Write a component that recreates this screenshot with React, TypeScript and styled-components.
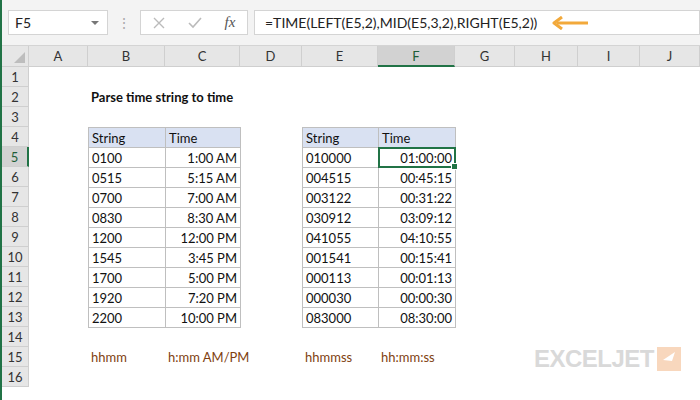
import React from 'react';
import styled, { createGlobalStyle } from 'styled-components';

const Global = createGlobalStyle`
  html, body { margin: 0; padding: 0; background: #fff; }
  body { width: 700px; height: 400px; overflow: hidden; font-family: Lato, "Liberation Sans", sans-serif; }
`;

const COLS = [27, 59, 77, 75, 62, 76, 77, 60, 63, 62, 60];
const LETTERS = ['A', 'B', 'C', 'D', 'E', 'F', 'G', 'H', 'I', 'J'];

const Page = styled.div`
  position: relative;
  width: 700px;
  height: 400px;
  overflow: hidden;
  border-left: 2px solid #217346;
  box-sizing: border-box;
`;

const FormulaBar = styled.div`
  height: 46px;
  background: #f3f3f3;
  display: flex;
  align-items: center;
  padding: 0 0 0 6px;
  gap: 6px;
  border-bottom: 1px solid #d4d4d4;
  box-sizing: border-box;
`;

const Box = styled.div<{ $w?: number }>`
  height: 25px;
  ${p => (p.$w ? `width: ${p.$w}px;` : 'flex: 1;')}
  background: #fff;
  border: 1px solid #d4d4d4;
  display: flex;
  align-items: center;
  box-sizing: border-box;
  font-size: 14px;
  color: #222;
`;

const NameText = styled.span`
  flex: 1;
  padding-left: 6px;
`;

const Caret = styled.span`
  width: 0; height: 0;
  border-left: 4px solid transparent;
  border-right: 4px solid transparent;
  border-top: 4px solid #777;
  margin-right: 8px;
`;

const Dots = styled.div`
  width: 20px;
  text-align: center;
  color: #aaa;
  font-size: 14px;
`;

const FxIcons = styled.div`
  display: flex;
  justify-content: space-around;
  align-items: center;
  width: 100%;
`;

const Fx = styled.span`
  font-family: "Liberation Serif", serif;
  font-style: italic;
  color: #555;
  font-size: 15px;
`;

const FormulaText = styled.span`
  padding-left: 10px;
  font-size: 14px;
  display: flex;
  align-items: center;
  gap: 14px;
`;

const Grid = styled.div`
  display: grid;
  grid-template-columns: ${COLS.map(c => c + 'px').join(' ')};
  grid-auto-rows: 20px;
  grid-template-rows: 21px;
`;

const ColHead = styled.div<{ $sel?: boolean }>`
  background: ${p => (p.$sel ? '#d2d2d2' : '#e6e6e6')};
  border-right: 1px solid #cfcfcf;
  border-bottom: ${p => (p.$sel ? '2px solid #217346' : '1px solid #cfcfcf')};
  box-sizing: border-box;
  display: flex;
  align-items: center;
  justify-content: center;
  font-size: 13px;
  color: ${p => (p.$sel ? '#1e5e38' : '#333')};
`;

const Corner = styled(ColHead)`
  position: relative;
  &::after {
    content: '';
    position: absolute;
    right: 3px; bottom: 3px;
    border-left: 11px solid transparent;
    border-bottom: 11px solid #bdbdbd;
  }
`;

const RowHead = styled.div<{ $sel?: boolean }>`
  background: ${p => (p.$sel ? '#d2d2d2' : '#e6e6e6')};
  border-bottom: 1px solid #cfcfcf;
  border-right: ${p => (p.$sel ? '2px solid #217346' : '1px solid #cfcfcf')};
  box-sizing: border-box;
  display: flex;
  align-items: center;
  justify-content: center;
  font-size: 13px;
  color: ${p => (p.$sel ? '#1e5e38' : '#333')};
`;

type Kind = 'none' | 'head' | 'cell';

const Cell = styled.div<{ $kind: Kind; $right?: boolean; $bold?: boolean; $color?: string; $active?: boolean }>`
  position: relative;
  box-sizing: border-box;
  font-size: 13px;
  display: flex;
  align-items: center;
  padding: 0 3px;
  white-space: nowrap;
  overflow: visible;
  justify-content: ${p => (p.$right ? 'flex-end' : 'flex-start')};
  font-weight: ${p => (p.$bold ? 700 : 400)};
  color: ${p => p.$color || '#111'};
  background: ${p => (p.$kind === 'head' ? '#d9e1f2' : p.$kind === 'cell' ? '#fff' : 'transparent')};
  ${p => (p.$kind !== 'none' ? 'border: 1px solid #bfbfbf; margin: 0 -1px -1px 0;' : '')}
  ${p =>
    p.$active
      ? `outline: 2px solid #217346; outline-offset: -2px; z-index: 2;
         &::after { content: ''; position: absolute; right: -3px; bottom: -3px; width: 5px; height: 5px; background: #217346; border: 1px solid #fff; }`
      : ''}
`;

const Logo = styled.div`
  position: absolute;
  left: 532px;
  top: 345px;
  display: flex;
  align-items: center;
  gap: 3px;
  font-family: "Liberation Sans", sans-serif;
  font-weight: 900;
  font-size: 24px;
  color: #d9d9d9;
  letter-spacing: -0.5px;
`;

const LogoMark = styled.div`
  width: 24px;
  height: 24px;
  background: #f8d7bd;
  display: flex;
  align-items: center;
  justify-content: center;
`;

const t1 = [
  ['0100', '1:00 AM'], ['0515', '5:15 AM'], ['0700', '7:00 AM'], ['0830', '8:30 AM'],
  ['1200', '12:00 PM'], ['1545', '3:45 PM'], ['1700', '5:00 PM'], ['1920', '7:20 PM'], ['2200', '10:00 PM'],
];
const t2 = [
  ['010000', '01:00:00'], ['004515', '00:45:15'], ['003122', '00:31:22'], ['030912', '03:09:12'],
  ['041055', '04:10:55'], ['001541', '00:15:41'], ['000113', '00:01:13'], ['000030', '00:00:30'], ['083000', '08:30:00'],
];

type C = { text?: string; kind?: Kind; right?: boolean; bold?: boolean; color?: string; active?: boolean };

function rowCells(r: number): C[] {
  const cells: C[] = Array.from({ length: 10 }, () => ({}));
  const brown = '#7f3f10';
  if (r === 2) cells[1] = { text: 'Parse time string to time', bold: true };
  if (r === 4) {
    cells[1] = { text: 'String', kind: 'head' };
    cells[2] = { text: 'Time', kind: 'head' };
    cells[4] = { text: 'String', kind: 'head' };
    cells[5] = { text: 'Time', kind: 'head' };
  }
  if (r >= 5 && r <= 13) {
    const i = r - 5;
    cells[1] = { text: t1[i][0], kind: 'cell' };
    cells[2] = { text: t1[i][1], kind: 'cell', right: true };
    cells[4] = { text: t2[i][0], kind: 'cell' };
    cells[5] = { text: t2[i][1], kind: 'cell', right: true, active: r === 5 };
  }
  if (r === 15) {
    cells[1] = { text: 'hhmm', color: brown };
    cells[2] = { text: 'h:mm AM/PM', color: brown };
    cells[4] = { text: 'hhmmss', color: brown };
    cells[5] = { text: 'hh:mm:ss', color: brown };
  }
  return cells;
}

const App: React.FC = () => (
  <Page>
    <Global />
    <FormulaBar>
      <Box $w={100}><NameText>F5</NameText><Caret /></Box>
      <Dots>⋮</Dots>
      <Box $w={108}>
        <FxIcons>
          <svg width="12" height="12" viewBox="0 0 12 12"><path d="M1 1L11 11M11 1L1 11" stroke="#bbb" strokeWidth="1.4" /></svg>
          <svg width="14" height="12" viewBox="0 0 14 12"><path d="M1 6L5 10L13 1" stroke="#bbb" strokeWidth="1.6" fill="none" /></svg>
          <Fx>fx</Fx>
        </FxIcons>
      </Box>
      <Box>
        <FormulaText>
          =TIME(LEFT(E5,2),MID(E5,3,2),RIGHT(E5,2))
          <svg width="38" height="14" viewBox="0 0 38 14">
            <path d="M37 7H6" stroke="#f2a93b" strokeWidth="3" />
            <path d="M11 1L3 7L11 13" stroke="#f2a93b" strokeWidth="3" fill="none" strokeLinejoin="round" />
          </svg>
        </FormulaText>
      </Box>
    </FormulaBar>
    <Grid>
      <Corner />
      {LETTERS.map(l => <ColHead key={l} $sel={l === 'F'}>{l}</ColHead>)}
      {Array.from({ length: 16 }, (_, k) => k + 1).map(r => (
        <React.Fragment key={r}>
          <RowHead $sel={r === 5}>{r}</RowHead>
          {rowCells(r).map((c, i) => (
            <Cell key={i} $kind={c.kind || 'none'} $right={c.right} $bold={c.bold} $color={c.color} $active={c.active}>
              {c.text}
            </Cell>
          ))}
        </React.Fragment>
      ))}
    </Grid>
    <Logo>
      EXCELJET
      <LogoMark>
        <svg width="14" height="16" viewBox="0 0 14 16"><path d="M13 1L1 9L10 10Z M10 10L11 15" fill="#fff" /></svg>
      </LogoMark>
    </Logo>
  </Page>
);

export default App;
